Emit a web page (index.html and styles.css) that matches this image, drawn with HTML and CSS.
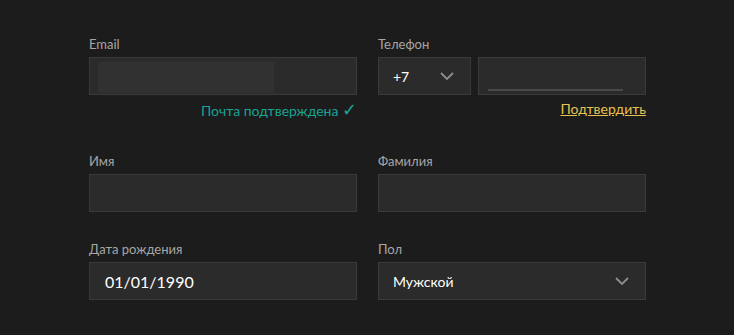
FILE: index.html
```html
<!DOCTYPE html>
<html>
  <head>
    <title>Профиль</title>
    <link rel="stylesheet" href="styles.css">
  </head>

  <body>
    <!-- Profile form -->
    <div class="form">
      <div class="field">
        <p class="label">Email</p>
        <div class="input">
          <span class="blur-email"></span>
        </div>
        <p class="hint hint-ok">Почта подтверждена <span class="check">✓</span></p>
      </div>

      <div class="field">
        <p class="label">Телефон</p>
        <div class="phone">
          <div class="input code">
            <span class="value">+7</span>
            <svg class="chevron" width="14" height="8" viewBox="0 0 14 8"><path d="M1 1l6 6 6-6" fill="none" stroke="#8e8e8e" stroke-width="1.8"/></svg>
          </div>
          <div class="input number">
            <span class="blur-line"></span>
          </div>
        </div>
        <p class="hint"><a href="#" class="confirm">Подтвердить</a></p>
      </div>

      <div class="field">
        <p class="label">Имя</p>
        <div class="input"></div>
      </div>

      <div class="field">
        <p class="label">Фамилия</p>
        <div class="input"></div>
      </div>

      <div class="field">
        <p class="label">Дата рождения</p>
        <div class="input date">01/01/1990</div>
      </div>

      <div class="field">
        <p class="label">Пол</p>
        <div class="input select">
          <span class="value">Мужской</span>
          <svg class="chevron" width="14" height="8" viewBox="0 0 14 8"><path d="M1 1l6 6 6-6" fill="none" stroke="#8e8e8e" stroke-width="1.8"/></svg>
        </div>
      </div>
    </div>
  </body>
</html>
```

FILE: styles.css
```css
/* Profile form, dark theme */
body{
  margin: 0;
  padding: 36px 0 0 89px;
  background-color: #1c1c1c;
  color: white;
  font-family: Lato, "Open Sans", sans-serif;
}

.form{
  display: grid;
  grid-template-columns: 268px 268px;
  column-gap: 21px;
  row-gap: 29px;
}

.label{
  margin: 0 0 5px 0;
  font-size: 13px;
  line-height: 16px;
  color: #a6a6a6;
}

.input{
  box-sizing: border-box;
  height: 38px;
  background-color: #2b2b2b;
  border: 1px solid #3a3a3a;
  display: flex;
  align-items: center;
  position: relative;
}

.blur-email{
  position: absolute;
  left: 8px;
  top: 4px;
  width: 176px;
  height: 31px;
  background-color: #313131;
}

.phone{
  display: flex;
  gap: 7px;
}

.code{
  width: 93px;
  padding: 0 16px 0 14px;
  justify-content: space-between;
}

.number{
  flex: 1;
}

.blur-line{
  position: absolute;
  left: 9px;
  bottom: 3px;
  width: 135px;
  height: 2px;
  background-color: #4a4a4a;
}

.value{
  font-size: 14px;
}

.hint{
  margin: 6px 0 0 0;
  height: 23px;
  font-size: 14px;
  line-height: 16px;
  text-align: right;
}

.hint-ok{
  color: #1aa396;
}

.check{
  font-size: 18px;
}

.confirm{
  color: #e8c250;
}

.date{
  padding-left: 15px;
  font-size: 16px;
}

.select{
  padding: 0 16px 0 14px;
  justify-content: space-between;
}
```
